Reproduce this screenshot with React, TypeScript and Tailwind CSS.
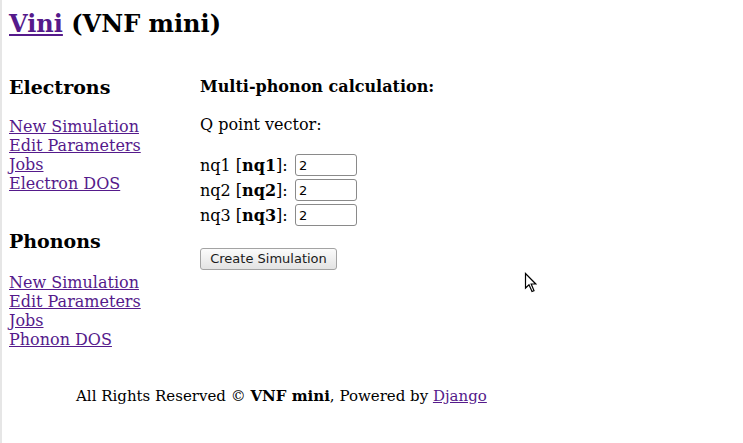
import React from "react";

const linkCls = "text-[#551a8b] underline";

function Field({ n }: { n: number }) {
  return (
    <div className="flex h-[22px] items-center">
      <span className="w-[92px] leading-[19px]">
        nq{n} [<b>nq{n}</b>]:
      </span>
      <input
        defaultValue="2"
        className="ml-[3px] h-[22px] w-[62px] rounded-[3px] border border-[#8a8a8a] bg-white px-[3px] font-['DejaVu_Sans'] text-[13px] text-black outline-none"
      />
    </div>
  );
}

export default function App() {
  return (
    <div className="relative min-h-[443px] border-l-2 border-[#e6e6e6] bg-white pl-[7px] font-['DejaVu_Serif',serif] text-[16px] text-black">
      <h1 className="pt-[10px] text-[24px] font-bold leading-[28px]">
        <a href="#" className={linkCls}>Vini</a> (VNF mini)
      </h1>
      <div className="mt-[38px] flex">
        <div className="w-[191px]">
          <h3 className="text-[19px] font-bold leading-[22px]">Electrons</h3>
          <div className="mt-[19px] flex flex-col items-start leading-[19px]">
            <a href="#" className={linkCls}>New Simulation</a>
            <a href="#" className={linkCls}>Edit Parameters</a>
            <a href="#" className={linkCls}>Jobs</a>
            <a href="#" className={linkCls}>Electron DOS</a>
          </div>
          <h3 className="mt-[37px] text-[19px] font-bold leading-[22px]">Phonons</h3>
          <div className="mt-[21px] flex flex-col items-start leading-[19px]">
            <a href="#" className={linkCls}>New Simulation</a>
            <a href="#" className={linkCls}>Edit Parameters</a>
            <a href="#" className={linkCls}>Jobs</a>
            <a href="#" className={linkCls}>Phonon DOS</a>
          </div>
        </div>
        <div className="pt-px">
          <div className="font-bold leading-[19px]">Multi-phonon calculation:</div>
          <div className="mt-[19px] leading-[19px]">Q point vector:</div>
          <div className="mt-[20px] flex flex-col gap-[3px]">
            <Field n={1} />
            <Field n={2} />
            <Field n={3} />
          </div>
          <button className="mt-[22px] h-[22px] w-[137px] rounded-[3px] border border-[#a3a3a3] bg-gradient-to-b from-[#fbfbfb] to-[#e3e3e3] font-['DejaVu_Sans'] text-[13px] text-[#1a1a1a]">
            Create Simulation
          </button>
        </div>
      </div>
      <div className="mt-[38px] pl-[67px] text-[15px] leading-[19px]">
        All Rights Reserved © <b>VNF mini</b>, Powered by{" "}
        <a href="#" className={linkCls}>Django</a>
      </div>
      <svg
        className="absolute left-[522px] top-[272px]"
        width="13"
        height="21"
        viewBox="0 0 13 21"
      >
        <path
          d="M1.5 1.5 L1.5 16 L5 12.7 L8 19.5 L10 18.6 L7.2 12 L11.8 12 Z"
          fill="white"
          stroke="black"
          strokeWidth="1.2"
          strokeLinejoin="miter"
        />
      </svg>
    </div>
  );
}
